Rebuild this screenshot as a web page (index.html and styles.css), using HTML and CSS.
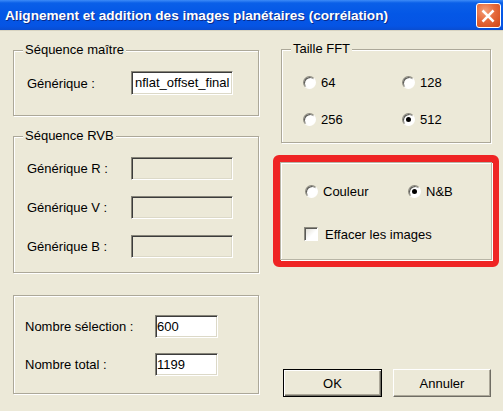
FILE: index.html
```html
<!DOCTYPE html>
<html lang="fr">
<head>
<meta charset="utf-8">
<title>Alignement</title>
<link rel="stylesheet" href="styles.css">
</head>
<body>
<div class="titlebar">
  <span class="title">Alignement et addition des images planétaires (corrélation)</span>
  <span class="close">
    <svg width="25" height="25" viewBox="0 0 25 25">
      <path d="M7 7 L17 17 M17 7 L7 17" stroke="#fff" stroke-width="2.8" stroke-linecap="square"/>
    </svg>
  </span>
</div>
<div class="dialog">
  <div class="col left">
    <div class="group g-master">
      <span class="legend">Séquence maître</span>
      <div class="field"><span class="lbl">Générique :</span><span class="edit">nflat_offset_final</span></div>
    </div>
    <div class="group g-rvb">
      <span class="legend">Séquence RVB</span>
      <div class="field"><span class="lbl">Générique R :</span><span class="edit disabled"></span></div>
      <div class="field"><span class="lbl">Générique V :</span><span class="edit disabled"></span></div>
      <div class="field"><span class="lbl">Générique B :</span><span class="edit disabled"></span></div>
    </div>
    <div class="group g-count">
      <div class="field"><span class="lbl">Nombre sélection :</span><span class="edit num">600</span></div>
      <div class="field"><span class="lbl">Nombre total :</span><span class="edit num">1199</span></div>
    </div>
  </div>
  <div class="col right">
    <div class="group g-fft">
      <span class="legend">Taille FFT</span>
      <div class="grid2">
        <label class="opt"><span class="radio"></span>64</label>
        <label class="opt"><span class="radio"></span>128</label>
        <label class="opt"><span class="radio"></span>256</label>
        <label class="opt"><span class="radio on"></span>512</label>
      </div>
    </div>
    <div class="highlight">
      <div class="group g-mode">
        <div class="moderow">
          <label class="opt"><span class="radio"></span>Couleur</label>
          <label class="opt"><span class="radio on"></span>N&amp;B</label>
        </div>
        <label class="opt"><span class="check"></span>Effacer les images</label>
      </div>
    </div>
    <div class="buttons">
      <span class="btn default">OK</span>
      <span class="btn">Annuler</span>
    </div>
  </div>
</div>
</body>
</html>
```
FILE: styles.css
```css
html, body {
  margin: 0;
  padding: 0;
}
body {
  width: 503px;
  height: 411px;
  overflow: hidden;
  background: #ece9d8;
  font-family: "Liberation Sans", Arial, sans-serif;
  font-size: 13px;
  color: #000;
}
.titlebar {
  height: 31px;
  display: flex;
  align-items: center;
  justify-content: space-between;
  background: linear-gradient(to bottom, #3d8bf7 0px, #0a5fe8 3px, #0457e6 14px, #0554e4 26px, #0a4bcc 31px);
  padding: 0 2px 0 5px;
  box-sizing: border-box;
  border-bottom: 1px solid #d8d4c2;
}
.title {
  color: #fff;
  font-weight: bold;
  font-size: 13.6px;
  text-shadow: 1px 1px 0 #0a2a8a;
}
.close {
  width: 25px;
  height: 25px;
  box-sizing: border-box;
  border: 1px solid #fff;
  border-radius: 3px;
  background: radial-gradient(circle at 35% 30%, #f4a07a 0%, #e66a3c 45%, #cf4515 100%);
  display: flex;
}
.close svg { display: block; }
.dialog {
  display: flex;
  gap: 14px;
  padding-left: 13px;
}
.col {
  display: flex;
  flex-direction: column;
}
.left {
  width: 246px;
  padding-top: 19px;
}
.right {
  width: 226px;
  padding-top: 18px;
}
.group {
  position: relative;
  border: 1px solid #aca899;
  box-shadow: inset 1px 1px 0 #fff, 1px 1px 0 #fff;
  box-sizing: border-box;
}
.legend {
  position: absolute;
  top: -9px;
  left: 9px;
  padding: 0 2px;
  background: #ece9d8;
  line-height: 16px;
}
.field {
  display: flex;
  align-items: center;
}
.lbl {
  display: block;
}
.edit {
  display: block;
  box-sizing: border-box;
  height: 23px;
  border: 1px solid;
  border-color: #868478 #fff #fff #868478;
  box-shadow: inset 1px 1px 0 #3c3c3c, inset -1px -1px 0 #dcd9c8;
  background: #fff;
  padding: 3px 0 0 3px;
  line-height: 16px;
  white-space: nowrap;
}
.edit.disabled {
  background: #ece9d8;
}
.g-master {
  height: 66px;
  padding: 20px 0 0 13px;
}
.g-master .lbl { width: 104px; }
.g-master .edit { width: 102px; height: 24px; }
.g-rvb {
  margin-top: 20px;
  height: 137px;
  padding: 20px 0 0 13px;
  display: flex;
  flex-direction: column;
  gap: 16px;
}
.g-rvb .lbl { width: 104px; }
.g-rvb .edit { width: 102px; }
.g-count {
  margin-top: 22px;
  height: 99px;
  padding: 19px 0 0 11px;
  display: flex;
  flex-direction: column;
  gap: 15px;
}
.g-count .lbl { width: 130px; }
.g-count .edit { width: 63px; padding-left: 1px; }
.g-fft {
  margin: 0 8px;
  height: 94px;
  padding: 24px 0 0 21px;
}
.grid2 {
  display: grid;
  grid-template-columns: 99px 80px;
  row-gap: 21px;
}
.opt {
  display: flex;
  align-items: center;
  height: 16px;
  gap: 5px;
  white-space: nowrap;
}
.radio {
  position: relative;
  display: block;
  width: 13px;
  height: 13px;
  box-sizing: border-box;
  border-radius: 50%;
  border: 1px solid;
  border-color: #8d8b80 #fff #fff #8d8b80;
  box-shadow: inset 1px 1px 0 #5a5a56;
  background: radial-gradient(circle at 65% 65%, #fff 0%, #fff 50%, #e6e4da 100%);
}
.radio.on::after {
  content: "";
  position: absolute;
  left: 3px;
  top: 3px;
  width: 5px;
  height: 5px;
  border-radius: 50%;
  background: #000;
}
.check {
  display: block;
  width: 14px;
  height: 14px;
  box-sizing: border-box;
  border: 1px solid;
  border-color: #8d8b80 #fff #fff #8d8b80;
  box-shadow: inset 1px 1px 0 #5a5a56;
  background: linear-gradient(135deg, #dedcd2 0%, #fff 60%);
  margin-right: 2px;
}
.highlight {
  margin-top: 12px;
  height: 112px;
  box-sizing: border-box;
  border: 7px solid #ef2424;
  border-radius: 6px;
}
.g-mode {
  height: 98px;
  padding: 20px 0 0 24px;
  display: flex;
  flex-direction: column;
  gap: 27px;
  border-color: #b8b5a6;
}
.moderow {
  display: flex;
}
.moderow .opt:first-child { width: 103px; }
.g-mode .check { margin-left: -1px; }
.buttons {
  margin-top: 102px;
  display: flex;
  gap: 11px;
  padding-left: 10px;
}
.btn {
  display: flex;
  align-items: center;
  justify-content: center;
  box-sizing: border-box;
  width: 98px;
  height: 28px;
  border: 1px solid;
  border-color: #fff #6f6d64 #6f6d64 #fff;
  box-shadow: inset -1px -1px 0 #aca899;
  background: #ece9d8;
}
.btn.default {
  width: 99px;
  border: 1px solid #000;
  box-shadow: inset 1px 1px 0 #fff, inset -1px -1px 0 #6f6d64, inset -2px -2px 0 #aca899;
}
```
